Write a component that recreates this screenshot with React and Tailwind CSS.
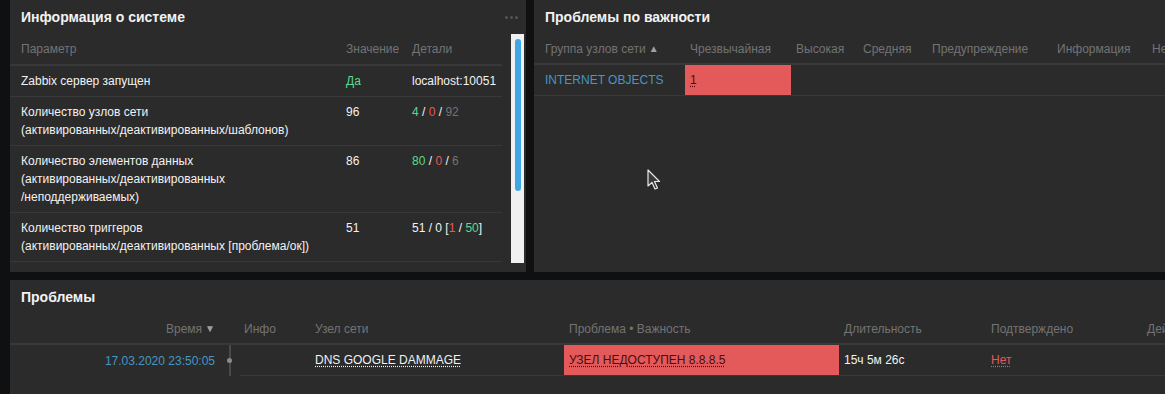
import React from 'react';

// ---------------------------------------------------------
// Dark dashboard widgets (Zabbix-like)
// ---------------------------------------------------------
const font = { fontFamily: '"Liberation Sans", Arial, sans-serif' };

const Panel = ({ className = '', children }) => (
  <div className={`bg-[#2b2b2b] flex flex-col overflow-hidden shrink-0 ${className}`}>{children}</div>
);

const Title = ({ children, dots }) => (
  <div className="h-[34px] shrink-0 flex items-center justify-between pl-[11px] pr-[8px]">
    <span className="text-[14px] font-bold text-[#f2f2f2]">{children}</span>
    {dots && (
      <span className="flex gap-[2px]">
        <span className="w-[3px] h-[3px] rounded-full bg-[#555]" />
        <span className="w-[3px] h-[3px] rounded-full bg-[#555]" />
        <span className="w-[3px] h-[3px] rounded-full bg-[#555]" />
      </span>
    )}
  </div>
);

const sysRows = [
  {
    p: ['Zabbix сервер запущен'],
    v: <span className="text-[#59db8f]">Да</span>,
    d: 'localhost:10051',
  },
  {
    p: ['Количество узлов сети', '(активированных/деактивированных/шаблонов)'],
    v: '96',
    d: (
      <>
        <span className="text-[#59db8f]">4</span> / <span className="text-[#e45959]">0</span> /{' '}
        <span className="text-[#737373]">92</span>
      </>
    ),
  },
  {
    p: ['Количество элементов данных', '(активированных/деактивированных', '/неподдерживаемых)'],
    v: '86',
    d: (
      <>
        <span className="text-[#59db8f]">80</span> / <span className="text-[#e45959]">0</span> /{' '}
        <span className="text-[#737373]">6</span>
      </>
    ),
  },
  {
    p: ['Количество триггеров', '(активированных/деактивированных [проблема/ок])'],
    v: '51',
    d: (
      <>
        51 / 0 [<span className="text-[#e45959]">1</span> / <span className="text-[#59db8f]">50</span>]
      </>
    ),
  },
];

const SystemInfo = () => (
  <Panel className="w-[516px] h-full">
    <Title dots>Информация о системе</Title>
    <div className="flex flex-1 min-h-0 pb-[9px]">
      <div className="w-[492px] shrink-0 overflow-hidden text-[12px] leading-[18px]">
        <div className="grid grid-cols-[331px_66px_95px] h-[32px] items-center text-[#737373] border-b-2 border-[#383838]">
          <div className="pl-[11px]">Параметр</div>
          <div className="pl-[5px]">Значение</div>
          <div className="pl-[5px]">Детали</div>
        </div>
        {sysRows.map((r, i) => (
          <div key={i} className="grid grid-cols-[331px_66px_95px] py-[6px] border-b border-[#383838] text-[#f2f2f2]">
            <div className="pl-[11px]">
              {r.p.map(line => (
                <div key={line} className="whitespace-nowrap">{line}</div>
              ))}
            </div>
            <div className="pl-[5px]">{r.v}</div>
            <div className="pl-[5px] whitespace-nowrap">{r.d}</div>
          </div>
        ))}
      </div>
      <div className="ml-[9px] w-[13px] shrink-0 bg-[#f0f0f0] flex justify-center pt-[5px]">
        <div className="w-[6px] h-[152px] rounded-full bg-[#3fa6e8]" />
      </div>
    </div>
  </Panel>
);

const sevCols = 'grid grid-cols-[151px_106px_67px_69px_125px_95px_200px]';

const ProblemsBySeverity = () => (
  <Panel className="w-[720px] h-full relative">
    <Title>Проблемы по важности</Title>
    <div className="text-[12px] leading-[18px]">
      <div className={`${sevCols} h-[31px] items-center text-[#737373] border-b-2 border-[#383838] whitespace-nowrap`}>
        <div className="pl-[11px] flex items-center gap-[3px]">
          Группа узлов сети <span className="text-[10px] text-[#a0a0a0]">▲</span>
        </div>
        <div className="pl-[5px]">Чрезвычайная</div>
        <div className="pl-[5px]">Высокая</div>
        <div className="pl-[5px]">Средняя</div>
        <div className="pl-[5px]">Предупреждение</div>
        <div className="pl-[5px]">Информация</div>
        <div className="pl-[5px]">Неклассифицированная</div>
      </div>
      <div className={`${sevCols} h-[31px] border-b border-[#383838]`}>
        <div className="pl-[11px] flex items-center text-[#4796c4] whitespace-nowrap">INTERNET OBJECTS</div>
        <div className="pl-[5px] flex items-center bg-[#e45959] text-[#4a0c0c]">
          <span className="underline decoration-dotted underline-offset-2">1</span>
        </div>
        <div />
        <div />
        <div />
        <div />
        <div />
      </div>
    </div>
    {/* mouse pointer */}
    <svg className="absolute left-[113px] top-[169px]" width="14" height="22" viewBox="0 0 14 22">
      <path d="M1 1 L1 17 L5 13.5 L8 20 L10.5 19 L7.5 12.5 L12.5 12.5 Z" fill="#3a3a3a" stroke="#e8e8e8" strokeWidth="1.2" strokeLinejoin="round" />
    </svg>
  </Panel>
);

const probCols = 'grid grid-cols-[210px_20px_70px_254px_275px_147px_156px_120px]';

const Problems = () => (
  <Panel className="w-[1220px] h-[114px]">
    <Title>Проблемы</Title>
    <div className="text-[12px] leading-[18px]">
      <div className={`${probCols} h-[31px] items-center text-[#737373] border-b-2 border-[#383838] whitespace-nowrap`}>
        <div className="pr-[5px] flex justify-end items-center gap-[3px]">
          Время <span className="text-[10px] text-[#a0a0a0]">▼</span>
        </div>
        <div />
        <div className="pl-[4px]">Инфо</div>
        <div className="pl-[5px]">Узел сети</div>
        <div className="pl-[5px]">Проблема • Важность</div>
        <div className="pl-[5px]">Длительность</div>
        <div className="pl-[5px]">Подтверждено</div>
        <div className="pl-[5px]">Действия</div>
      </div>
      <div className={`${probCols} h-[31px] whitespace-nowrap`}>
        <div className="pr-[5px] flex justify-end items-center text-[#4796c4]">17.03.2020 23:50:05</div>
        <div className="relative flex justify-center">
          <div className="w-[2px] h-full bg-[#4a4a4a]" />
          <div className="absolute top-[13px] left-[7px] w-[5px] h-[5px] rounded-full bg-[#8a8a8a]" />
        </div>
        <div className="border-b border-[#383838]" />
        <div className="pl-[5px] flex items-center text-[#f2f2f2] border-b border-[#383838]">
          <span className="underline decoration-dotted underline-offset-2">DNS GOOGLE DAMMAGE</span>
        </div>
        <div className="pl-[5px] flex items-center bg-[#e45959] text-[#4a0c0c] border-b border-[#383838]">
          <span className="underline decoration-dotted underline-offset-2">УЗЕЛ НЕДОСТУПЕН 8.8.8.5</span>
        </div>
        <div className="pl-[5px] flex items-center text-[#f2f2f2] border-b border-[#383838]">15ч 5м 26с</div>
        <div className="pl-[5px] flex items-center text-[#e45959] border-b border-[#383838]">
          <span className="underline decoration-dotted underline-offset-2">Нет</span>
        </div>
        <div className="border-b border-[#383838]" />
      </div>
    </div>
  </Panel>
);

export default function App() {
  return (
    <div className="w-[1165px] h-[394px] overflow-hidden bg-[#0e1012] pl-[10px] flex flex-col gap-[8px]" style={font}>
      <div className="flex gap-[8px] h-[272px] shrink-0">
        <SystemInfo />
        <ProblemsBySeverity />
      </div>
      <Problems />
    </div>
  );
}
